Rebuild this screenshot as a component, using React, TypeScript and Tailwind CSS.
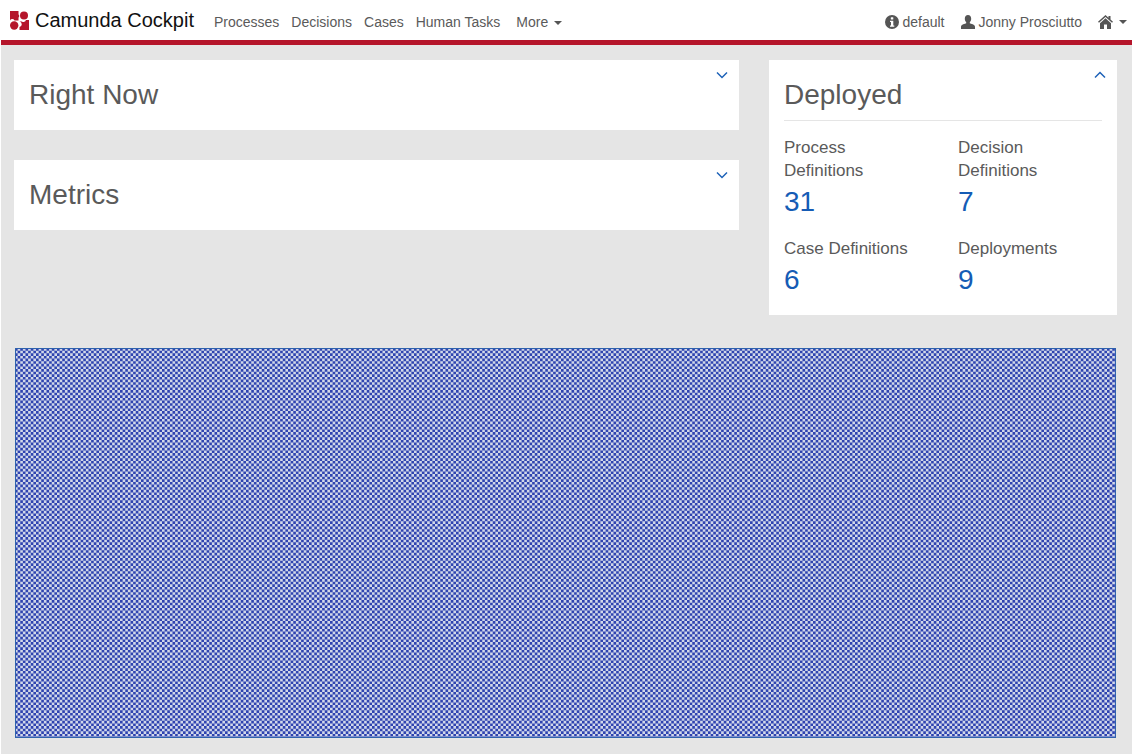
import React from "react";

const W = 1101;
const H = 390;
const CELL = 2.625;

function checkerPath() {
  let d = "";
  const cols = Math.ceil(W / CELL);
  const rows = Math.ceil(H / CELL);
  for (let j = 0; j < rows; j++) {
    for (let i = j % 2; i < cols; i += 2) {
      d += `M${(i * CELL).toFixed(3)} ${(j * CELL).toFixed(3)}h${CELL}v${CELL}h-${CELL}z`;
    }
  }
  return d;
}

const PATH = checkerPath();

function Hatch() {
  return (
    <svg width={W} height={H} viewBox={`0 0 ${W} ${H}`} className="block">
      <rect width={W} height={H} fill="#d2d8ea" />
      <path d={PATH} fill="#2f43b0" />
      <rect x="0.5" y="0.5" width={W - 1} height={H - 1} fill="none" stroke="#2f62ad" />
    </svg>
  );
}

function Logo() {
  return (
    <svg width="19" height="19" viewBox="0 0 19 19" className="block">
      <path fill="#b5152b" d="M0 0h8.500v3.200a2.600 2.600 0 0 1 0 3.600V9.500H4.500a2.500 2.500 0 0 0-4.500 0Z" />
      <circle cx="14" cy="4.500" r="4" fill="#b5152b" />
      <circle cx="4.200" cy="14.500" r="4.200" fill="#b5152b" />
      <path fill="#b5152b" d="M9.500 10.500h2.400a2.500 2.500 0 0 0 4-1.500H19v10H9.500v-3a2.800 2.800 0 0 0 0-5.500Z" />
    </svg>
  );
}

function Info() {
  return (
    <svg width="14" height="14" viewBox="0 0 14 14" className="block">
      <circle cx="7" cy="7" r="7" fill="#555" />
      <rect x="5.800" y="2.300" width="2.500" height="2.300" rx="0.500" fill="#fff" />
      <path d="M5 5.800h3.300v4.600H9.300v1.300H5v-1.300h1V7.100H5Z" fill="#fff" />
    </svg>
  );
}

function User() {
  return (
    <svg width="14" height="14" viewBox="0 0 14 14" className="block">
      <path
        fill="#555"
        d="M7 0c2 0 3.200 1.500 3.200 3.700 0 1.500-.6 2.800-1.400 3.500v1.100c1 .5 5.200 1.300 5.200 3.500V14H0v-2.200c0-2.200 4.200-3 5.200-3.500V7.200C4.400 6.500 3.800 5.200 3.800 3.700 3.800 1.500 5 0 7 0Z"
      />
    </svg>
  );
}

function Home() {
  return (
    <svg width="15" height="14" viewBox="0 0 15 14" className="block">
      <path fill="#555" d="M7.500 0 10.500 2.700V1H12.500V4.500L15 6.800 14 7.800 7.500 2 1 7.800 0 6.800Z" />
      <path fill="#555" d="M7.500 3.300 13 8.200V14H9V9.500H6V14H2V8.200Z" />
    </svg>
  );
}

function Caret() {
  return <span className="ml-[6px] inline-block border-x-4 border-t-4 border-x-transparent border-t-[#555] align-middle" />;
}

function Chevron({ up = false }: { up?: boolean }) {
  return (
    <svg width="12" height="8" viewBox="0 0 12 8" className="absolute right-[11px] top-[11px] block">
      <path
        d={up ? "M1 6.500 6 1.500 11 6.500" : "M1 1.500 6 6.500 11 1.500"}
        fill="none"
        stroke="#1e62b8"
        strokeWidth="1.500"
      />
    </svg>
  );
}

function CollapsedPanel({ title }: { title: string }) {
  return (
    <section className="relative flex h-[70px] items-center bg-white px-[15px]">
      <h2 className="text-[28px] leading-[34px] font-normal text-[#5a5a5a]">{title}</h2>
      <Chevron />
    </section>
  );
}

function Stat({ label, value }: { label: string; value: string }) {
  return (
    <div>
      <div className="text-[17px] leading-[23px] text-[#5a5a5a]">{label}</div>
      <div className="pt-px text-[28px] leading-[38px] text-[#155cb5]">{value}</div>
    </div>
  );
}

export default function App() {
  return (
    <div className="h-[754px] bg-white pl-px pr-[2px] font-['Liberation_Sans',Arial,sans-serif]">
      <div className="h-full bg-[#e5e5e5]">
        <header className="flex h-[45px] items-start border-b-[5px] border-[#b5152b] bg-white">
          <nav className="flex h-10 flex-1 items-center pl-[9px] text-[14px] text-[#5a5a5a]">
            <Logo />
            <span className="ml-[6px] mr-[20px] text-[20px] text-[#111]">Camunda Cockpit</span>
            <div className="flex items-center gap-x-[12px] pt-[4px]">
              <span>Processes</span>
              <span>Decisions</span>
              <span>Cases</span>
              <span>Human Tasks</span>
              <span className="ml-[4px]">
                More
                <Caret />
              </span>
            </div>
            <div className="ml-auto flex items-center pr-[5px] pt-[3px]">
              <Info />
              <span className="ml-[3px] mr-[16px] pt-px">default</span>
              <User />
              <span className="ml-[4px] mr-[16px] pt-px">Jonny Prosciutto</span>
              <Home />
              <Caret />
            </div>
          </nav>
        </header>
        <main className="pl-[13px] pr-[15px] pt-[15px]">
          <div className="flex items-start gap-x-[30px]">
            <div className="flex w-[725px] flex-col gap-y-[30px]">
              <CollapsedPanel title="Right Now" />
              <CollapsedPanel title="Metrics" />
            </div>
            <section className="relative h-[255px] w-[348px] bg-white px-[15px]">
              <h2 className="border-b border-[#e5e5e5] pb-[8px] pt-[18px] text-[28px] leading-[34px] font-normal text-[#5a5a5a]">
                Deployed
              </h2>
              <div className="mt-[15px] grid grid-cols-[144px_144px] gap-x-[30px] gap-y-[16px]">
                <Stat label="Process Definitions" value="31" />
                <Stat label="Decision Definitions" value="7" />
                <Stat label="Case Definitions" value="6" />
                <Stat label="Deployments" value="9" />
              </div>
              <Chevron up />
            </section>
          </div>
          <div className="ml-px mt-[33px] w-[1101px]">
            <Hatch />
          </div>
        </main>
      </div>
    </div>
  );
}
